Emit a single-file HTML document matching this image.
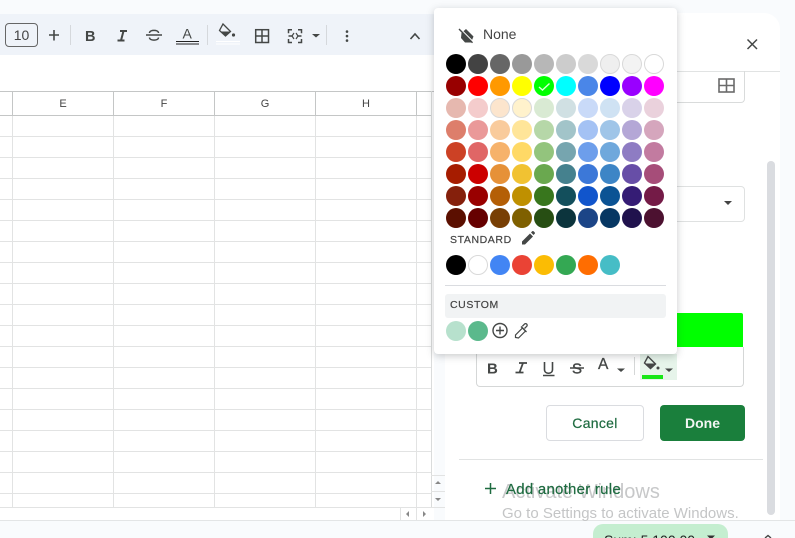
<!DOCTYPE html>
<html style="margin:0;padding:0;width:795px;height:538px;overflow:hidden"><head><meta charset="utf-8">
<style>
body{margin:0;padding:0;width:795px;height:538px;overflow:hidden;background:#f9fbfd;font-family:"Liberation Sans",sans-serif;color:#444746}
#w{position:relative;width:795px;height:538px;overflow:hidden;background:#f9fbfd}
.a{position:absolute}
.l{position:absolute;background:#e2e3e3}
.s{position:absolute;width:20px;height:20px;border-radius:50%;box-sizing:border-box}
.b{border:1px solid #d9d9d9}
.h{position:absolute;top:97px;width:100px;text-align:center;font-size:11px;color:#444;line-height:14px}
svg{position:absolute;overflow:visible}
</style></head><body><div id="w">

<!-- toolbar -->
<div class="a" style="left:0;top:14px;width:434px;height:41px;background:#eff3f9"></div>
<div class="a" style="left:0;top:55px;width:434px;height:465px;background:#fff"></div>
<div class="a" style="left:5px;top:23px;width:33px;height:24px;box-sizing:border-box;border:1px solid #666;border-radius:4px;font-size:14px;line-height:22px;text-align:center;color:#444">10</div>
<svg style="left:0;top:0" width="434" height="60" fill="none" stroke="#444746">
<path d="M54 30v10.500M49 35h10" stroke-width="1.600"/>
<path d="M70.500 25v20M207.500 25v20M326.500 25v20" stroke="#d5d8dc"/>
<text x="85" y="41" font-family="Liberation Sans" font-size="14.500" font-weight="700" fill="#444746" stroke="none">B</text>
<path d="M120 31h7M117.500 40.500h7M123.500 31l-2.500 9.500" stroke-width="2"/>
<path d="M146 35h16" stroke-width="1.500"/>
<path d="M149.500 33c0-3.500 9-3.500 9 0M149.500 37.500c0 3.500 9 3.500 9 0" stroke-width="1.500"/>
<text x="182.500" y="38.500" font-family="Liberation Sans" font-size="14" fill="#444746" stroke="none">A</text>
<path d="M176 41.500h23M176 44h23" stroke="#222" stroke-width="1"/>
<path d="M223 24l7.500 7.500-5 4.500-6-5.500z" stroke="#444746" stroke-width="1.300"/>
<path d="M220 31.500h10.500l-5 4.500z" fill="#444746" stroke="none"/>
<circle cx="233.500" cy="35" r="1.600" fill="#444746" stroke="none"/>
<path d="M216 41.500h24M216 44h24" stroke="#fff"/>
<rect x="255.700" y="29.700" width="12.800" height="12.800" stroke-width="1.500"/>
<path d="M262 30v12M256 36h12" stroke-width="1.500"/>
<path d="M292 29.700h-3.500v3.500M288.500 39v3.500h3.500M298 29.700h3.500v3.500M301.500 39v3.500h-3.500M288.500 36h4M297.500 36h4" stroke-width="1.500"/>
<path d="M294 33l-2 3 2 3M296 33l2 3-2 3" stroke-width="1.200"/>
<path d="M312 34h8l-4 3.500z" fill="#444746" stroke="none"/>
<path d="M347 31.500v.1M347 36v.1M347 40.500v.1" stroke-width="2.600" stroke-linecap="round"/>
<path d="M410.500 39l4.500-5 4.500 5" stroke-width="1.600"/>
</svg>

<!-- grid -->
<div class="l" style="left:0;top:91px;width:434px;height:1px;background:#c4c6c6"></div>
<div class="l" style="left:0;top:115px;width:431px;height:1px;background:#c4c6c6"></div>
<div class="l" style="left:12px;top:91px;width:1px;height:24px;background:#c4c6c6"></div>
<div class="l" style="left:113px;top:91px;width:1px;height:24px;background:#c4c6c6"></div>
<div class="l" style="left:214px;top:91px;width:1px;height:24px;background:#c4c6c6"></div>
<div class="l" style="left:315px;top:91px;width:1px;height:24px;background:#c4c6c6"></div>
<div class="l" style="left:416px;top:91px;width:1px;height:24px;background:#c4c6c6"></div>
<div class="l" style="left:431px;top:91px;width:1px;height:416px;background:#dadcdc"></div>
<div class="l" style="left:12px;top:116px;width:1px;height:391px"></div>
<div class="l" style="left:113px;top:116px;width:1px;height:391px"></div>
<div class="l" style="left:214px;top:116px;width:1px;height:391px"></div>
<div class="l" style="left:315px;top:116px;width:1px;height:391px"></div>
<div class="l" style="left:416px;top:116px;width:1px;height:391px"></div>
<div class="l" style="left:0;top:136px;width:431px;height:1px"></div>
<div class="l" style="left:0;top:157px;width:431px;height:1px"></div>
<div class="l" style="left:0;top:178px;width:431px;height:1px"></div>
<div class="l" style="left:0;top:199px;width:431px;height:1px"></div>
<div class="l" style="left:0;top:220px;width:431px;height:1px"></div>
<div class="l" style="left:0;top:241px;width:431px;height:1px"></div>
<div class="l" style="left:0;top:262px;width:431px;height:1px"></div>
<div class="l" style="left:0;top:283px;width:431px;height:1px"></div>
<div class="l" style="left:0;top:304px;width:431px;height:1px"></div>
<div class="l" style="left:0;top:325px;width:431px;height:1px"></div>
<div class="l" style="left:0;top:346px;width:431px;height:1px"></div>
<div class="l" style="left:0;top:367px;width:431px;height:1px"></div>
<div class="l" style="left:0;top:388px;width:431px;height:1px"></div>
<div class="l" style="left:0;top:409px;width:431px;height:1px"></div>
<div class="l" style="left:0;top:430px;width:431px;height:1px"></div>
<div class="l" style="left:0;top:451px;width:431px;height:1px"></div>
<div class="l" style="left:0;top:472px;width:431px;height:1px"></div>
<div class="l" style="left:0;top:493px;width:431px;height:1px"></div>
<div class="l" style="left:0;top:507px;width:431px;height:1px"></div>
<div class="h" style="left:13px">E</div>
<div class="h" style="left:114px">F</div>
<div class="h" style="left:215px">G</div>
<div class="h" style="left:316px">H</div>
<!-- scroll arrows -->
<div class="l" style="left:431px;top:475px;width:14px;height:1px"></div>
<div class="l" style="left:431px;top:491px;width:14px;height:1px"></div>
<div class="l" style="left:431px;top:507px;width:14px;height:1px"></div>
<div class="l" style="left:400px;top:507px;width:1px;height:13px"></div>
<div class="l" style="left:416px;top:507px;width:1px;height:13px"></div>
<svg style="left:0;top:0" width="450" height="520" fill="#888" stroke="none">
<path d="M435 484l3-3 3 3zM435 498h6l-3 3zM409 511v6l-3-3zM423 511v6l3-3z"/>
</svg>
<div class="a" style="left:0;top:520px;width:795px;height:18px;background:#f9fbfd;border-top:1px solid #e3e5e6;box-sizing:border-box"></div>

<!-- side panel -->
<div class="a" style="left:445px;top:13px;width:335px;height:507px;background:#fff;border-radius:16px 16px 0 0"></div>
<div class="a" style="left:445px;top:71px;width:335px;height:1px;background:#e1e3e3"></div>
<svg style="left:0;top:0" width="795" height="120" fill="none" stroke="#444746">
<path d="M747.500 39.500l9.500 9.500M757 39.500l-9.500 9.500" stroke-width="1.500"/>
<rect x="719" y="79" width="15" height="13" stroke="#6a6a6a" stroke-width="1.600"/>
<path d="M726.500 79v13M719 85.500h15" stroke="#6a6a6a" stroke-width="1.600"/>
</svg>
<div class="a" style="left:660px;top:71px;width:85px;height:32px;box-sizing:border-box;border:1px solid #d9dbdb;border-top:0;border-left:0;border-radius:0 0 4px 0"></div>
<div class="a" style="left:660px;top:186px;width:85px;height:36px;box-sizing:border-box;border:1px solid #dfe1e1;border-left:0;border-radius:0 4px 4px 0"></div>
<svg style="left:0;top:0" width="795" height="230"><path d="M724 201h8l-4 4z" fill="#444"/></svg>
<div class="a" style="left:767px;top:161px;width:8px;height:354px;background:#dadce0;border-radius:4px"></div>

<div class="a" style="left:670px;top:313px;width:73px;height:34px;background:#00ff00;border-radius:0 2px 0 0"></div>
<div class="a" style="left:476px;top:347px;width:268px;height:40px;box-sizing:border-box;border:1px solid #d5d7d7;border-top:0;border-radius:0 0 4px 4px"></div>
<div class="a" style="left:640px;top:354px;width:37px;height:26px;background:#e6f4ea"></div>
<div class="a" style="left:642px;top:375px;width:21px;height:4px;background:#16e716"></div>
<svg style="left:0;top:0" width="795" height="400" fill="none" stroke="#444746">
<text x="487" y="373.500" font-family="Liberation Sans" font-size="15" font-weight="700" fill="#444746" stroke="none">B</text>
<path d="M519 363h8M515.500 372.500h8M523 363l-3.500 9.500" stroke-width="1.800"/>
<path d="M544.500 362v7.500c0 5 8 5 8 0V362" stroke-width="1.600"/>
<path d="M543 375.500h11.500" stroke-width="1.500"/>
<text x="572" y="373.500" font-family="Liberation Sans" font-size="15" fill="#444746" stroke="#444746" stroke-width=".4">S</text>
<path d="M570 368h14" stroke-width="1.500"/>
<text x="598" y="369" font-family="Liberation Sans" font-size="15.500" fill="#444746" stroke="#444746" stroke-width=".3">A</text>
<path d="M617 368.500h8l-4 3.500z" fill="#444746" stroke="none"/>
<path d="M634.500 357v18" stroke="#d5d7d7"/>
<path d="M648 356.500l7.500 7.500-5 4.500-6-5.500z" stroke-width="1.400"/>
<path d="M645 363.500h10.500l-5 4.500z" fill="#444746" stroke="none"/>
<circle cx="658" cy="368" r="1.500" fill="#444746" stroke="none"/>
<path d="M665 368.500h8l-4 3.500z" fill="#444746" stroke="none"/>
</svg>

<div class="a" style="left:546px;top:405px;width:98px;height:36px;box-sizing:border-box;border:1px solid #dadce0;border-radius:4px;font-size:14px;line-height:34px;text-align:center;color:#1e6b40;letter-spacing:.3px;-webkit-text-stroke:.2px #1e6b40">Cancel</div>
<div class="a" style="left:660px;top:405px;width:85px;height:36px;background:#1a7f3c;border-radius:4px;font-size:14px;font-weight:700;line-height:36px;text-align:center;color:#f2f6f3">Done</div>
<div class="a" style="left:459px;top:459px;width:304px;height:1px;background:#e1e3e3"></div>

<div class="a" style="left:502px;top:481px;font-size:20px;line-height:22px;color:#c7c8c9;white-space:nowrap">Activate Windows</div>
<div class="a" style="left:502px;top:505px;font-size:15px;line-height:18px;color:#c4c5c6;white-space:nowrap">Go to Settings to activate Windows.</div>
<svg style="left:0;top:0" width="520" height="500" fill="none" stroke="#1e6b40"><path d="M490.500 483v11M485 488.500h11" stroke-width="1.500"/></svg>
<div class="a" style="left:506px;top:481px;font-size:15px;line-height:18px;letter-spacing:.25px;color:#1e6b40;white-space:nowrap;-webkit-text-stroke:.2px #1e6b40">Add another rule</div>

<div class="a" style="left:593px;top:524px;width:135px;height:20px;background:#c4eed0;border-radius:10px 10px 0 0"></div>
<div class="a" style="left:604px;top:532px;font-size:14px;line-height:16px;color:#1f1f1f;white-space:nowrap">Sum: 5,100.00</div>
<svg style="left:0;top:0" width="795" height="538"><path d="M707 535.500h8l-4 4z" fill="#333"/><path d="M765 538l3-2.500 3 2.500" fill="none" stroke="#444" stroke-width="1.400"/></svg>

<!-- popup -->
<div class="a" style="left:434px;top:8px;width:243px;height:346px;background:#fff;border-radius:4px;box-shadow:0 2px 8px rgba(60,64,67,.28)"></div>
<svg style="left:0;top:0" width="795" height="60" fill="#444746" stroke="none">
<path d="M461.500 33l4.500-4 7.500 7.500-2.500 6h-6l-4-4.500z"/>
<path d="M461 29.500l12.500 12.500" stroke="#fff" stroke-width="1.200"/>
<path d="M459 29l13.500 13.800" stroke="#444746" stroke-width="1.400"/>
</svg>
<div class="a" style="left:483px;top:26px;font-size:14px;line-height:17px;color:#444">None</div>

<div class="s" style="left:446px;top:54px;background:#000"></div>
<div class="s" style="left:468px;top:54px;background:#434343"></div>
<div class="s" style="left:490px;top:54px;background:#666"></div>
<div class="s" style="left:512px;top:54px;background:#999"></div>
<div class="s" style="left:534px;top:54px;background:#b7b7b7"></div>
<div class="s" style="left:556px;top:54px;background:#ccc"></div>
<div class="s" style="left:578px;top:54px;background:#d9d9d9"></div>
<div class="s b" style="left:600px;top:54px;background:#efefef"></div>
<div class="s b" style="left:622px;top:54px;background:#f3f3f3"></div>
<div class="s b" style="left:644px;top:54px;background:#fff"></div>

<div class="s" style="left:446px;top:76px;background:#980000"></div>
<div class="s" style="left:468px;top:76px;background:#f00"></div>
<div class="s" style="left:490px;top:76px;background:#f90"></div>
<div class="s" style="left:512px;top:76px;background:#ff0"></div>
<div class="s" style="left:534px;top:76px;background:#0f0"></div>
<div class="s" style="left:556px;top:76px;background:#0ff"></div>
<div class="s" style="left:578px;top:76px;background:#4a86e8"></div>
<div class="s" style="left:600px;top:76px;background:#00f"></div>
<div class="s" style="left:622px;top:76px;background:#90f"></div>
<div class="s" style="left:644px;top:76px;background:#f0f"></div>

<div class="s" style="left:446px;top:98px;background:#e6b8af"></div>
<div class="s" style="left:468px;top:98px;background:#f4cccc"></div>
<div class="s b" style="left:490px;top:98px;background:#fce5cd"></div>
<div class="s b" style="left:512px;top:98px;background:#fff2cc"></div>
<div class="s" style="left:534px;top:98px;background:#d9ead3"></div>
<div class="s" style="left:556px;top:98px;background:#d0e0e3"></div>
<div class="s" style="left:578px;top:98px;background:#c9daf8"></div>
<div class="s" style="left:600px;top:98px;background:#cfe2f3"></div>
<div class="s" style="left:622px;top:98px;background:#d9d2e9"></div>
<div class="s" style="left:644px;top:98px;background:#ead1dc"></div>

<div class="s" style="left:446px;top:120px;background:#dd7e6b"></div>
<div class="s" style="left:468px;top:120px;background:#ea9999"></div>
<div class="s" style="left:490px;top:120px;background:#f9cb9c"></div>
<div class="s" style="left:512px;top:120px;background:#ffe599"></div>
<div class="s" style="left:534px;top:120px;background:#b6d7a8"></div>
<div class="s" style="left:556px;top:120px;background:#a2c4c9"></div>
<div class="s" style="left:578px;top:120px;background:#a4c2f4"></div>
<div class="s" style="left:600px;top:120px;background:#9fc5e8"></div>
<div class="s" style="left:622px;top:120px;background:#b4a7d6"></div>
<div class="s" style="left:644px;top:120px;background:#d5a6bd"></div>

<div class="s" style="left:446px;top:142px;background:#cc4125"></div>
<div class="s" style="left:468px;top:142px;background:#e06666"></div>
<div class="s" style="left:490px;top:142px;background:#f6b26b"></div>
<div class="s" style="left:512px;top:142px;background:#ffd966"></div>
<div class="s" style="left:534px;top:142px;background:#93c47d"></div>
<div class="s" style="left:556px;top:142px;background:#76a5af"></div>
<div class="s" style="left:578px;top:142px;background:#6d9eeb"></div>
<div class="s" style="left:600px;top:142px;background:#6fa8dc"></div>
<div class="s" style="left:622px;top:142px;background:#8e7cc3"></div>
<div class="s" style="left:644px;top:142px;background:#c27ba0"></div>

<div class="s" style="left:446px;top:164px;background:#a61c00"></div>
<div class="s" style="left:468px;top:164px;background:#c00"></div>
<div class="s" style="left:490px;top:164px;background:#e69138"></div>
<div class="s" style="left:512px;top:164px;background:#f1c232"></div>
<div class="s" style="left:534px;top:164px;background:#6aa84f"></div>
<div class="s" style="left:556px;top:164px;background:#45818e"></div>
<div class="s" style="left:578px;top:164px;background:#3c78d8"></div>
<div class="s" style="left:600px;top:164px;background:#3d85c6"></div>
<div class="s" style="left:622px;top:164px;background:#674ea7"></div>
<div class="s" style="left:644px;top:164px;background:#a64d79"></div>

<div class="s" style="left:446px;top:186px;background:#85200c"></div>
<div class="s" style="left:468px;top:186px;background:#900"></div>
<div class="s" style="left:490px;top:186px;background:#b45f06"></div>
<div class="s" style="left:512px;top:186px;background:#bf9000"></div>
<div class="s" style="left:534px;top:186px;background:#38761d"></div>
<div class="s" style="left:556px;top:186px;background:#134f5c"></div>
<div class="s" style="left:578px;top:186px;background:#1155cc"></div>
<div class="s" style="left:600px;top:186px;background:#0b5394"></div>
<div class="s" style="left:622px;top:186px;background:#351c75"></div>
<div class="s" style="left:644px;top:186px;background:#741b47"></div>

<div class="s" style="left:446px;top:208px;background:#5b0f00"></div>
<div class="s" style="left:468px;top:208px;background:#660000"></div>
<div class="s" style="left:490px;top:208px;background:#783f04"></div>
<div class="s" style="left:512px;top:208px;background:#7f6000"></div>
<div class="s" style="left:534px;top:208px;background:#274e13"></div>
<div class="s" style="left:556px;top:208px;background:#0c343d"></div>
<div class="s" style="left:578px;top:208px;background:#1c4587"></div>
<div class="s" style="left:600px;top:208px;background:#073763"></div>
<div class="s" style="left:622px;top:208px;background:#20124d"></div>
<div class="s" style="left:644px;top:208px;background:#4c1130"></div>

<svg style="left:0;top:0" width="795" height="100" fill="none"><path d="M539 87l3.500 3 7-6.500" stroke="#d8ffd8" stroke-width="1.400"/></svg>

<div class="a" style="left:450px;top:234px;font-size:10.500px;line-height:13px;letter-spacing:.6px;color:#444;-webkit-text-stroke:.2px #444">STANDARD</div>
<svg style="left:0;top:0" width="795" height="260" fill="#444746"><path d="M522 244.500v-3l8-8 3 3-8 8zM531 232.500l1.200-1.200a1 1 0 0 1 1.400 0l1.100 1.100a1 1 0 0 1 0 1.400L533.500 235z"/></svg>

<div class="s" style="left:446px;top:255px;background:#000"></div>
<div class="s b" style="left:468px;top:255px;background:#fff"></div>
<div class="s" style="left:490px;top:255px;background:#4285f4"></div>
<div class="s" style="left:512px;top:255px;background:#ea4335"></div>
<div class="s" style="left:534px;top:255px;background:#fbbc04"></div>
<div class="s" style="left:556px;top:255px;background:#34a853"></div>
<div class="s" style="left:578px;top:255px;background:#ff6d01"></div>
<div class="s" style="left:600px;top:255px;background:#46bdc6"></div>

<div class="a" style="left:445px;top:285px;width:221px;height:1px;background:#dadce0"></div>
<div class="a" style="left:445px;top:294px;width:221px;height:24px;background:#f1f3f4;border-radius:3px"></div>
<div class="a" style="left:450px;top:299px;font-size:10.500px;line-height:13px;letter-spacing:.6px;color:#444;-webkit-text-stroke:.2px #444">CUSTOM</div>

<div class="s" style="left:446px;top:321px;background:#b7e1cd"></div>
<div class="s" style="left:468px;top:321px;background:#5bb98c"></div>
<svg style="left:0;top:0" width="795" height="350" fill="none" stroke="#444746">
<circle cx="500" cy="330.500" r="7" stroke-width="1.400"/>
<path d="M500 326.500v8M496 330.500h8" stroke-width="1.400"/>
<path d="M515.500 337.500v-2.500l7-7 3 3-7 7z" stroke-width="1.200"/>
<path d="M521 326.500l5.500 5.500" stroke-width="1.300"/>
<path d="M524.500 328.500l2.200-2.200a1.500 1.500 0 0 0-2.200-2.200l-2.200 2.200" stroke-width="1.300"/>
</svg>
</div></body></html>
